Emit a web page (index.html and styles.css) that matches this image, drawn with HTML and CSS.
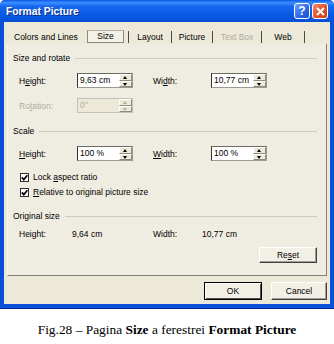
FILE: index.html
```html
<!doctype html>
<html lang="en">
    <head>
        <meta charset="UTF-8" />
        <link rel="stylesheet" href="styles.css">
        <title>Format Picture</title>
    </head>
    <body>
        <div class="window">
            <div class="titlebar">
                <span class="title">Format Picture</span>
                <span class="cbtn help">?</span>
                <span class="cbtn close">
                    <svg width="9" height="9" viewBox="0 0 9 9">
                        <path d="M1 1 L8 8 M8 1 L1 8" stroke="#fff" stroke-width="2" />
                    </svg>
                </span>
            </div>
            <div class="client">
                <!-- tab strip -->
                <div class="tabs">
                    <span class="tab tab-colors">Colors and Lines</span>
                    <span class="tab tab-active">Size</span>
                    <span class="tab tab-sep tab-layout">Layout</span>
                    <span class="tab tab-sep tab-picture">Picture</span>
                    <span class="tab tab-sep tab-textbox disabled">Text Box</span>
                    <span class="tab tab-sep tab-web">Web</span>
                </div>

                <div class="panel">
                    <div class="group-head head-size">Size and rotate</div>
                    <div class="field-row row-1">
                        <label>H<u>e</u>ight:</label>
                        <span class="spin"><span class="val">9,63 cm</span><span class="arrows"><i class="up"></i><i class="down"></i></span></span>
                        <span></span>
                        <label>Wi<u>d</u>th:</label>
                        <span class="spin"><span class="val">10,77 cm</span><span class="arrows"><i class="up"></i><i class="down"></i></span></span>
                    </div>
                    <div class="field-row row-2 disabled">
                        <label>Ro<u>t</u>ation:</label>
                        <span class="spin"><span class="val">0°</span><span class="arrows"><i class="up"></i><i class="down"></i></span></span>
                    </div>

                    <div class="group-head head-scale">Scale</div>
                    <div class="field-row row-3">
                        <label><u>H</u>eight:</label>
                        <span class="spin"><span class="val">100 %</span><span class="arrows"><i class="up"></i><i class="down"></i></span></span>
                        <span></span>
                        <label><u>W</u>idth:</label>
                        <span class="spin"><span class="val">100 %</span><span class="arrows"><i class="up"></i><i class="down"></i></span></span>
                    </div>
                    <div class="check check-1">
                        <span class="box"><svg width="7" height="7" viewBox="0 0 7 7"><path d="M0.8 3.4 L2.8 5.6 L6.4 1.2" fill="none" stroke="#000" stroke-width="1.7" /></svg></span>
                        <span>Lock <u>a</u>spect ratio</span>
                    </div>
                    <div class="check check-2">
                        <span class="box"><svg width="7" height="7" viewBox="0 0 7 7"><path d="M0.8 3.4 L2.8 5.6 L6.4 1.2" fill="none" stroke="#000" stroke-width="1.7" /></svg></span>
                        <span><u>R</u>elative to original picture size</span>
                    </div>

                    <div class="group-head head-orig">Original size</div>
                    <div class="orig-row">
                        <span>Height:</span>
                        <span>9,64 cm</span>
                        <span>Width:</span>
                        <span>10,77 cm</span>
                    </div>

                    <button class="btn btn-reset">Re<u>s</u>et</button>
                </div>

                <div class="buttons">
                    <button class="btn btn-ok">OK</button>
                    <button class="btn btn-cancel">Cancel</button>
                </div>
            </div>
        </div>
        <p class="fig-caption">Fig.28 – Pagina <b>Size</b> a ferestrei <b>Format Picture</b></p>
    </body>
</html>
```

FILE: styles.css
```css
body,
html,
p {
    padding: 0;
    margin: 0;
}
body {
    background: #ffffff;
    font-family: "Liberation Sans", Arial, sans-serif;
    font-size: 8.5px;
    color: #000000;
}
u {
    text-decoration: underline;
}

/* -- WINDOW FRAME -- */

.window {
    width: 334px;
    height: 309px;
    box-sizing: border-box;
    display: flex;
    flex-direction: column;
    background: #0b4ed8;
    border-radius: 5px 5px 0 0;
    border-bottom: 1px solid #00289a;
}
.titlebar {
    height: 22px;
    flex: none;
    display: flex;
    align-items: center;
    padding: 0 6px;
    border-radius: 5px 5px 0 0;
    background: linear-gradient(
        #0a5ae6,
        #3c8cff 12%,
        #1566ee 30%,
        #0a58e2 70%,
        #0650d6 100%
    );
}
.title {
    flex: 1;
    color: #ffffff;
    font-weight: bold;
    font-size: 10.3px;
    text-shadow: 1px 1px 0 #0a2f8a;
}
.cbtn {
    width: 16px;
    height: 16px;
    box-sizing: border-box;
    border: 1px solid #ffffff;
    border-radius: 3px;
    display: flex;
    align-items: center;
    justify-content: center;
    color: #ffffff;
    font-weight: bold;
    font-size: 12px;
}
.help {
    margin-right: 2px;
    background: linear-gradient(135deg, #6aa0ff, #2a66e8 60%, #1a4fd0);
}
.close {
    background: linear-gradient(135deg, #f09070, #e0502a 55%, #c8401c);
}
.client {
    flex: 1;
    margin: 0 4px 4px;
    padding: 6px 3px 4px;
    background: #ece9d8;
    display: flex;
    flex-direction: column;
}

/* -- TABS -- */

.tabs {
    height: 16px;
    flex: none;
    display: flex;
    align-items: flex-end;
    padding-left: 7px;
    padding-bottom: 1px;
    box-sizing: border-box;
}
.tab {
    height: 12px;
    line-height: 12px;
    box-sizing: border-box;
    text-align: center;
}
.tab-colors {
    width: 73px;
    text-align: left;
}
.tab-active {
    width: 37px;
    height: 13px;
    line-height: 11px;
    margin-right: 4px;
    border: 1px solid #8a8a80;
    border-top-color: #b4b2a6;
    background: #f4f2e8;
}
.tab-sep {
    border-left: 1px solid #4a4a4a;
}
.tab-layout {
    width: 43px;
}
.tab-picture {
    width: 41px;
}
.tab-textbox {
    width: 49px;
}
.tab-web {
    width: 44px;
    border-right: 1px solid #4a4a4a;
}
.disabled,
.disabled label,
.disabled .val {
    color: #b0ad9e;
}

/* -- PANEL -- */

.panel {
    flex: 1;
    display: flex;
    flex-direction: column;
    padding: 8px 9px 0 5px;
    border-left: 1px solid #f8f7f0;
    border-right: 1px solid #808078;
    border-bottom: 1px solid #808078;
    background: #efede2;
}
.group-head {
    height: 12px;
    line-height: 12px;
    display: flex;
    align-items: center;
}
.group-head::after {
    content: "";
    flex: 1;
    height: 1px;
    margin-left: 5px;
    background: #cfccbc;
}
.field-row {
    display: grid;
    grid-template-columns: 58px 56px 20px 58px 56px;
    align-items: center;
    height: 15px;
    margin-left: 6px;
}
.row-1 {
    margin-top: 9px;
}
.row-2 {
    margin-top: 10px;
}
.head-scale {
    margin-top: 12px;
}
.row-3 {
    margin-top: 9px;
}
.spin {
    height: 15px;
    box-sizing: border-box;
    display: flex;
    align-items: stretch;
    background: #ffffff;
    border: 1px solid #9c9a90;
    border-left-color: #333333;
    border-top-color: #6c6a62;
}
.disabled .spin {
    background: #ece9d8;
    border-color: #c4c2b6;
}
.val {
    flex: 1;
    line-height: 13px;
    padding-left: 2px;
}
.arrows {
    width: 13px;
    display: flex;
    flex-direction: column;
    background: #ece9d8;
}
.arrows i {
    flex: 1;
    position: relative;
    border-bottom: 1px solid #8e8c82;
    border-right: 1px solid #8e8c82;
    border-top: 1px solid #ffffff;
    border-left: 1px solid #ffffff;
}
.arrows i::after {
    content: "";
    position: absolute;
    left: 3px;
    top: 1px;
    border-left: 2.5px solid transparent;
    border-right: 2.5px solid transparent;
}
.arrows .up::after {
    border-bottom: 3px solid #000000;
}
.arrows .down::after {
    border-top: 3px solid #000000;
}
.disabled .arrows .up::after {
    border-bottom-color: #b0ad9e;
}
.disabled .arrows .down::after {
    border-top-color: #b0ad9e;
}

.check {
    height: 12px;
    display: flex;
    align-items: center;
    margin-left: 7px;
    gap: 4px;
}
.check-1 {
    margin-top: 10px;
}
.check-2 {
    margin-top: 3px;
}
.box {
    width: 9px;
    height: 9px;
    box-sizing: border-box;
    border: 1px solid #303030;
    background: #ffffff;
    display: flex;
    align-items: center;
    justify-content: center;
}
.head-orig {
    margin-top: 12px;
}
.orig-row {
    margin-top: 6px;
    margin-left: 6px;
    height: 12px;
    line-height: 12px;
    display: grid;
    grid-template-columns: 53px 81px 49px 60px;
}

/* -- BUTTONS -- */

.btn {
    font-family: inherit;
    font-size: 8.5px;
    color: #000000;
    padding: 0;
    box-sizing: border-box;
    background: #f2f0e6;
    border: 1px solid #ffffff;
    border-right-color: #404040;
    border-bottom-color: #404040;
    box-shadow: inset -1px -1px 0 #a09e94;
}
.btn-reset {
    align-self: flex-end;
    width: 58px;
    height: 16px;
    margin-top: 7px;
}
.buttons {
    flex: none;
    display: flex;
    justify-content: flex-end;
    gap: 9px;
    margin-top: 6px;
    height: 18px;
}
.btn-ok {
    width: 58px;
    border: 1px solid #000000;
    box-shadow: inset 1px 1px 0 #ffffff, inset -1px -1px 0 #505050;
}
.btn-cancel {
    width: 56px;
}

/* -- FIGURE CAPTION -- */

.fig-caption {
    margin-top: 14px;
    line-height: 14px;
    text-align: center;
    font-family: "Liberation Serif", "Times New Roman", serif;
    font-size: 13.4px;
}
```
